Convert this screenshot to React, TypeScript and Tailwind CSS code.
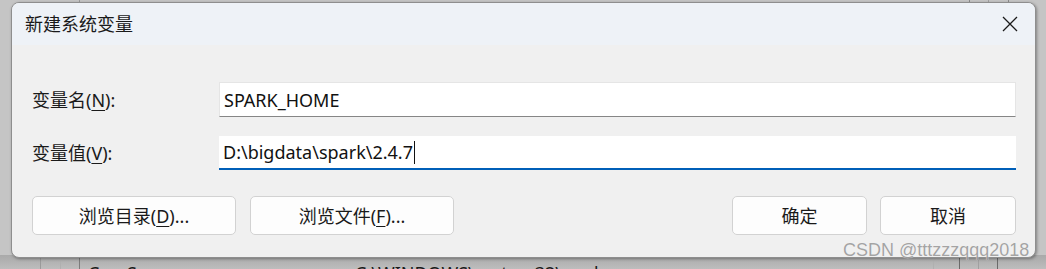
import React from "react";

const CJK = '"Noto Sans", "Noto Sans CJK SC", sans-serif';

function Label({ text, mn }: { text: string; mn: string }) {
  return (
    <div className="w-[187px] shrink-0 text-[18px] text-[#1a1a1a] leading-none">
      {text}(<span className="underline underline-offset-[3px] decoration-1">{mn}</span>):
    </div>
  );
}

function Btn({ children, w }: { children: React.ReactNode; w: string }) {
  return (
    <div
      className={`${w} h-[39px] flex items-center justify-center rounded-[5px] border border-[#d2d2d2] bg-[#fdfdfd] text-[18px] text-[#1a1a1a] leading-none`}
    >
      {children}
    </div>
  );
}

export default function App() {
  return (
    <div
      className="relative w-[1046px] h-[269px] overflow-hidden bg-[#c5c5c5]"
      style={{ fontFamily: CJK }}
    >
      {/* window behind the dialog */}
      <div className="absolute left-0 right-0 top-0 h-[3px] flex">
        <div className="w-[79px]" />
        <div className="w-px bg-[#9a9a9a]" />
        <div className="w-[889px]" />
        <div className="w-px bg-[#8a8a8a]" />
        <div className="w-[18px]" />
        <div className="w-px bg-[#a0a0a0]" />
        <div className="w-[19px]" />
        <div className="w-px bg-[#8a8a8a]" />
      </div>
      <div className="absolute left-0 right-0 top-[255px] h-[14px] bg-gradient-to-b from-[#a9a9a9] to-[#bdbdbd] flex overflow-hidden">
        <div className="w-[40px]" />
        <div className="w-px bg-[#9a9a9a]" />
        <div className="w-[19px]" />
        <div className="w-px bg-[#b0b0b0]" />
        <div className="w-[18px]" />
        <div className="w-px bg-[#7c7c7c]" />
        <div className="w-[267px] pl-[8px] pt-[9px] text-[18px] leading-none text-[#1a1a1a] whitespace-nowrap">ComSpec</div>
        <div className="w-[586px] pl-[8px] pt-[9px] text-[18px] leading-none text-[#1a1a1a] whitespace-nowrap">
          C:\WINDOWS\system32\cmd.exe
        </div>
        <div className="w-px bg-[#b0b0b0]" />
        <div className="w-[25px]" />
        <div className="w-px bg-[#6a6a6a]" />
        <div className="w-[18px]" />
        <div className="w-px bg-[#a0a0a0]" />
        <div className="w-[18px]" />
        <div className="w-px bg-[#6a6a6a]" />
      </div>

      {/* dialog */}
      <div className="relative ml-[11px] mt-[2px] w-[1025px] h-[256px] rounded-[8px] border border-[#8e8e8e] bg-[#f0f0f0] overflow-hidden shadow-[1px_1px_3px_rgba(0,0,0,0.35)]">
        <div className="h-[42px] bg-[#eef2f7] flex items-center justify-between pl-[13px] pr-[16px]">
          <div className="text-[18px] text-[#1a1a1a] leading-none">新建系统变量</div>
          <svg width="16" height="16" viewBox="0 0 16 16" className="mr-[1px]">
            <path d="M1 1 L15 15 M15 1 L1 15" stroke="#1a1a1a" strokeWidth="1.3" fill="none" />
          </svg>
        </div>
        <div className="pl-[20px] pr-[19px] pt-[37px]">
          <div className="flex items-center h-[35px]">
            <Label text="变量名" mn="N" />
            <div className="flex-1 h-[35px] bg-white border border-[#e5e5e5] border-b-[#868686] flex items-center pl-[4px] text-[18px] text-[#111] leading-none">
              SPARK_HOME
            </div>
          </div>
          <div className="flex items-center h-[34px] mt-[19px]">
            <Label text="变量值" mn="V" />
            <div className="flex-1 h-[34px] bg-white border-b-2 border-[#005fb8] flex items-center pl-[4px] text-[18px] text-[#111] leading-none">
              D:\bigdata\spark\2.4.7
              <span className="inline-block w-px h-[23px] bg-[#111] ml-[1px]" />
            </div>
          </div>
          <div className="flex items-center mt-[26px]">
            <Btn w="w-[204px]">
              浏览目录(<span className="underline underline-offset-[3px] decoration-1">D</span>)...
            </Btn>
            <div className="ml-[14px]">
              <Btn w="w-[204px]">
                浏览文件(<span className="underline underline-offset-[3px] decoration-1">F</span>)...
              </Btn>
            </div>
            <div className="flex-1" />
            <Btn w="w-[135px]">确定</Btn>
            <div className="ml-[13px]">
              <Btn w="w-[136px]">取消</Btn>
            </div>
          </div>
        </div>
      </div>

      {/* watermark */}
      <div
        className="absolute left-[843px] top-[240px] text-[18px] leading-[20px] text-[#9c9c9c] opacity-90"
        style={{ fontFamily: '"Liberation Sans", sans-serif', textShadow: "0 0 1px #ffffff" }}
      >
        CSDN @tttzzzqqq2018
      </div>
    </div>
  );
}
